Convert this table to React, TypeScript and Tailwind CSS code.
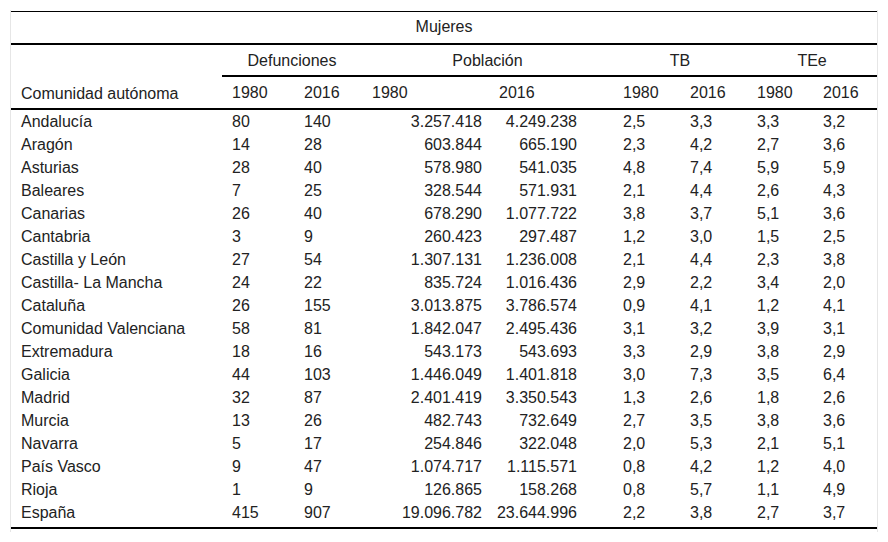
const rows: [string, string, string, string, string, string, string, string, string][] = [
  ['Andalucía', '80', '140', '3.257.418', '4.249.238', '2,5', '3,3', '3,3', '3,2'],
  ['Aragón', '14', '28', '603.844', '665.190', '2,3', '4,2', '2,7', '3,6'],
  ['Asturias', '28', '40', '578.980', '541.035', '4,8', '7,4', '5,9', '5,9'],
  ['Baleares', '7', '25', '328.544', '571.931', '2,1', '4,4', '2,6', '4,3'],
  ['Canarias', '26', '40', '678.290', '1.077.722', '3,8', '3,7', '5,1', '3,6'],
  ['Cantabria', '3', '9', '260.423', '297.487', '1,2', '3,0', '1,5', '2,5'],
  ['Castilla y León', '27', '54', '1.307.131', '1.236.008', '2,1', '4,4', '2,3', '3,8'],
  ['Castilla- La Mancha', '24', '22', '835.724', '1.016.436', '2,9', '2,2', '3,4', '2,0'],
  ['Cataluña', '26', '155', '3.013.875', '3.786.574', '0,9', '4,1', '1,2', '4,1'],
  ['Comunidad Valenciana', '58', '81', '1.842.047', '2.495.436', '3,1', '3,2', '3,9', '3,1'],
  ['Extremadura', '18', '16', '543.173', '543.693', '3,3', '2,9', '3,8', '2,9'],
  ['Galicia', '44', '103', '1.446.049', '1.401.818', '3,0', '7,3', '3,5', '6,4'],
  ['Madrid', '32', '87', '2.401.419', '3.350.543', '1,3', '2,6', '1,8', '2,6'],
  ['Murcia', '13', '26', '482.743', '732.649', '2,7', '3,5', '3,8', '3,6'],
  ['Navarra', '5', '17', '254.846', '322.048', '2,0', '5,3', '2,1', '5,1'],
  ['País Vasco', '9', '47', '1.074.717', '1.115.571', '0,8', '4,2', '1,2', '4,0'],
  ['Rioja', '1', '9', '126.865', '158.268', '0,8', '5,7', '1,1', '4,9'],
  ['España', '415', '907', '19.096.782', '23.644.996', '2,2', '3,8', '2,7', '3,7'],
];

export default function App() {
  const last = rows.length - 1;
  return (
    <div
      className="w-[888px] h-[542px] bg-white pt-[10px] pl-[10px] text-[16px] leading-[18px] text-[#222]"
      style={{ fontFamily: '"Liberation Sans", Arial, sans-serif' }}
    >
      <div className="w-[868px] border-x border-[#e6e6e6] pt-px pb-[3px]">
        <table className="w-full table-fixed border-collapse">
          <colgroup>
            <col className="w-[211px]" />
            <col className="w-[72px]" />
            <col className="w-[68px]" />
            <col className="w-[127px]" />
            <col className="w-[124px]" />
            <col className="w-[67px]" />
            <col className="w-[67px]" />
            <col className="w-[66px]" />
            <col className="w-[64px]" />
          </colgroup>
          <thead>
            <tr className="h-[32px] border-t border-black">
              <th colSpan={9} className="border-b-2 border-black text-center font-normal">
                Mujeres
              </th>
            </tr>
            <tr className="h-[32px]">
              <th rowSpan={2} className="pl-[10px] pb-[5px] text-left align-bottom font-normal">
                Comunidad autónoma
              </th>
              <th colSpan={2} className="border-b-2 border-black pt-[2px] text-center font-normal">
                Defunciones
              </th>
              <th colSpan={2} className="border-b-2 border-black pt-[2px] text-center font-normal">
                Población
              </th>
              <th colSpan={2} className="border-b-2 border-black pt-[2px] text-center font-normal">
                TB
              </th>
              <th colSpan={2} className="border-b-2 border-black pt-[2px] text-center font-normal">
                TEe
              </th>
            </tr>
            <tr className="h-[33px] border-b-2 border-black">
              {['1980', '2016', '1980', '2016', '1980', '2016', '1980', '2016'].map((y, i) => (
                <th key={i} className="pl-[10px] pt-[2px] text-left font-normal">
                  {y}
                </th>
              ))}
            </tr>
          </thead>
          <tbody className="border-b-2 border-black">
            {rows.map((r, i) => {
              const pad = i === last ? 'pt-[3px] pb-[4px]' : 'pt-[3px]';
              return (
                <tr key={r[0]} className={i === last ? 'h-[28px]' : 'h-[23px]'}>
                  <td className={`pl-[10px] ${pad}`}>{r[0]}</td>
                  <td className={`pl-[10px] ${pad}`}>{r[1]}</td>
                  <td className={`pl-[10px] ${pad}`}>{r[2]}</td>
                  <td className={`pr-[7px] text-right ${pad}`}>{r[3]}</td>
                  <td className={`pr-[36px] text-right ${pad}`}>{r[4]}</td>
                  {r.slice(5).map((v, j) => (
                    <td key={j} className={`pl-[10px] ${pad}`}>
                      {v}
                    </td>
                  ))}
                </tr>
              );
            })}
          </tbody>
        </table>
      </div>
    </div>
  );
}
